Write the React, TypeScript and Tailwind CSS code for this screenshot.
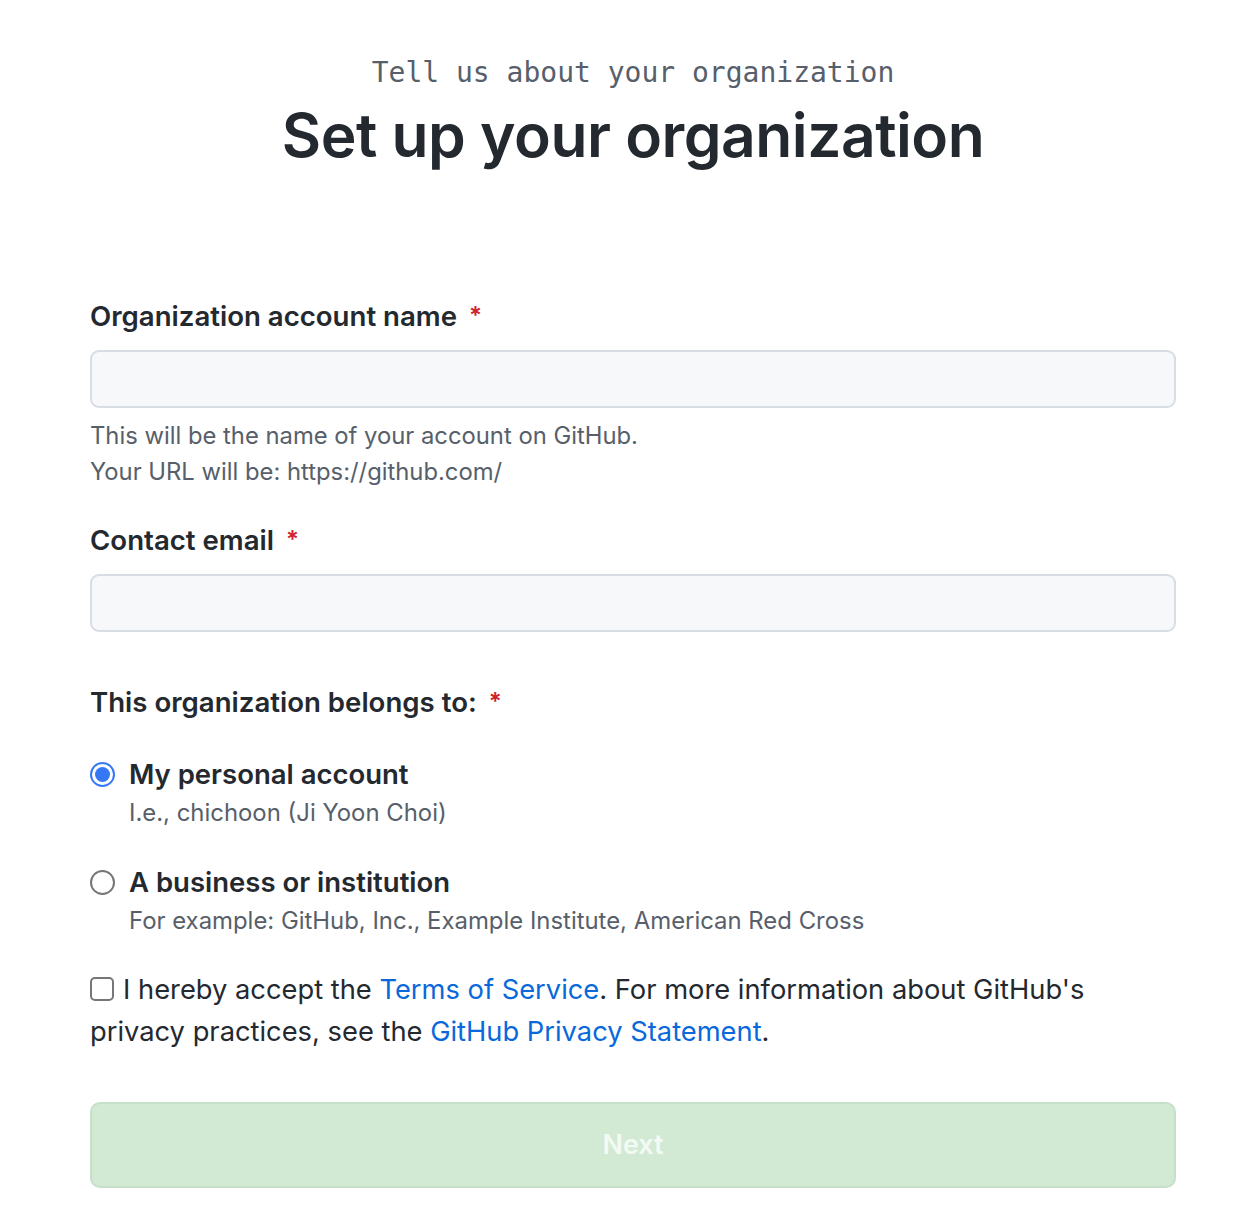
import React from "react";

const sans = { fontFamily: "Inter, 'Noto Sans', 'Liberation Sans', sans-serif" };

function Label({ children }: { children: React.ReactNode }) {
  return (
    <div className="flex items-center text-[27.6px] font-semibold text-[#24292f] leading-[32px]">
      <span>{children}</span>
      <span className="ml-[12px] text-[#cf222e] text-[24px]">*</span>
    </div>
  );
}

function Input() {
  return (
    <div className="h-[58px] w-full rounded-[9px] border-2 border-[#d8dde3] bg-[#f6f8fa]" />
  );
}

export default function App() {
  return (
    <div className="min-h-[1230px] bg-white" style={sans}>
      <div className="ml-[90px] w-[1086px] pt-[53px]">
        <div
          className="text-center text-[28px] leading-[40px] text-[#57606a]"
          style={{ fontFamily: "'DejaVu Sans Mono', 'Liberation Mono', monospace" }}
        >
          Tell us about your organization
        </div>
        <h1 className="mt-[4px] text-center text-[60.5px] font-semibold leading-[76px] tracking-[-0.5px] text-[#24292f]">
          Set up your organization
        </h1>

        <div className="mt-[127px]">
          <Label>Organization account name</Label>
          <div className="mt-[18px]">
            <Input />
          </div>
          <div className="mt-[10px] text-[23.8px] leading-[36px] text-[#57606a]">
            <div>This will be the name of your account on GitHub.</div>
            <div>Your URL will be: https://github.com/</div>
          </div>
        </div>

        <div className="mt-[34px]">
          <Label>Contact email</Label>
          <div className="mt-[18px]">
            <Input />
          </div>
        </div>

        <div className="mt-[54px]">
          <Label>This organization belongs to:</Label>
        </div>

        <div className="mt-[38px]">
          <div className="flex items-center gap-[14px]">
            <span className="flex h-[25px] w-[25px] items-center justify-center rounded-full border-[2px] border-[#3478f6] bg-white">
              <span className="h-[15px] w-[15px] rounded-full bg-[#3478f6]" />
            </span>
            <span className="text-[27.5px] font-semibold leading-[36px] text-[#24292f]">My personal account</span>
          </div>
          <div className="ml-[39px] mt-[3px] text-[23.9px] leading-[36px] text-[#57606a]">I.e., chichoon (Ji Yoon Choi)</div>
        </div>

        <div className="mt-[33px]">
          <div className="flex items-center gap-[14px]">
            <span className="h-[25px] w-[25px] rounded-full border-[2px] border-[#767676] bg-white" />
            <span className="text-[27.5px] font-semibold leading-[36px] text-[#24292f]">A business or institution</span>
          </div>
          <div className="ml-[39px] mt-[3px] text-[23.9px] leading-[36px] text-[#57606a]">
            For example: GitHub, Inc., Example Institute, American Red Cross
          </div>
        </div>

        <div className="mt-[30px] text-[27.3px] leading-[42px] text-[#24292f]">
          <span className="mr-[9px] inline-block h-[24px] w-[24px] translate-y-[2px] rounded-[5px] border-[2px] border-[#767676] bg-white align-baseline" />
          I hereby accept the <span className="text-[#0969da]">Terms of Service</span>. For more information about GitHub's
          <br />
          privacy practices, see the <span className="text-[#0969da]">GitHub Privacy Statement</span>.
        </div>

        <div className="mt-[49px] flex h-[86px] w-full items-center justify-center rounded-[10px] border-2 border-[#c6dfc9] bg-[#d2e9d4] text-[27px] font-semibold text-[#f3faf4]">
          Next
        </div>
      </div>
    </div>
  );
}
